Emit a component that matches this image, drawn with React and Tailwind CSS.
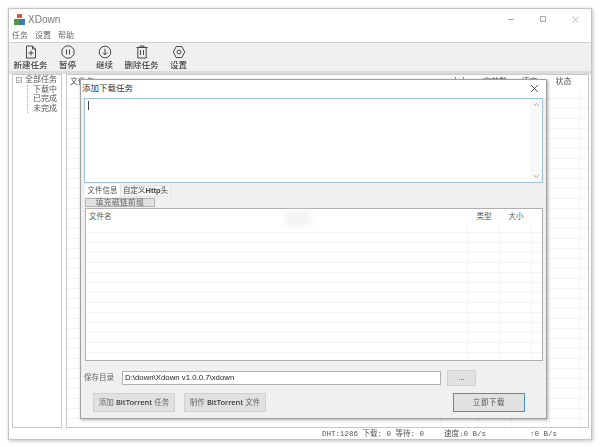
const cjk = "font-['Liberation_Sans','Noto_Sans_CJK_SC',sans-serif]";

const tools = [
  { label: "新建任务", icon: "new" },
  { label: "暂停", icon: "pause" },
  { label: "继续", icon: "down" },
  { label: "删除任务", icon: "trash" },
  { label: "设置", icon: "gear" },
];

function ToolIcon({ name }) {
  const common = { width: 14, height: 14, viewBox: "0 0 14 14", fill: "none", stroke: "#333", strokeWidth: 0.9 };
  if (name === "new")
    return (
      <svg {...common}>
        <path d="M2.500 1h6l3 3v9h-9z M8.500 1v3h3 M7 5.500v5 M4.500 8h5" />
      </svg>
    );
  if (name === "pause")
    return (
      <svg {...common}>
        <circle cx="7" cy="7" r="6.200" />
        <path d="M5.500 4.500v5 M8.500 4.500v5" />
      </svg>
    );
  if (name === "down")
    return (
      <svg {...common}>
        <circle cx="7" cy="7" r="5.800" />
        <path d="M7 3.800v6 M4.800 7.600L7 9.800l2.200-2.200" />
      </svg>
    );
  if (name === "trash")
    return (
      <svg {...common}>
        <path d="M1.500 2.500h11 M5 2.500v-1.500h4v1.500 M2.800 2.500v10.500h8.400v-10.500 M5.500 5v5 M8.500 5v5" />
      </svg>
    );
  return (
    <svg {...common}>
      <path d="M4.200 1.500h5.600l2.900 5.500-2.900 5.500h-5.600l-2.900-5.500z" strokeLinejoin="round" />
      <circle cx="7" cy="7" r="1.900" />
    </svg>
  );
}

function GridRows({ count, columns }) {
  return (
    <div className="flex-1 overflow-hidden">
      {Array.from({ length: count }).map((_, i) => (
        <div key={i} className="flex h-[10px] border-b border-[#f4f4f4]">
          {columns.map((c, j) => (
            <div key={j} className={`${c} border-r border-[#f4f4f4]`} />
          ))}
        </div>
      ))}
    </div>
  );
}

function Dialog() {
  const boldName = "font-['Noto_Sans'] font-medium text-[7.500px] text-[#333]";
  return (
    <div className="absolute left-[71px] top-[70px] flex h-[340px] w-[467px] flex-col border border-[#a0a0a0] bg-[#f0f0f0] shadow-[1px_1px_3px_rgba(0,0,0,0.35)]">
      <div className="flex h-[18px] items-center justify-between bg-white pb-[2px] pl-[1px] pr-[7px] text-[8.500px] text-[#333]">
        <span>添加下载任务</span>
        <svg width="9" height="9" viewBox="0 0 9 9" stroke="#444" strokeWidth="0.9">
          <path d="M1 1l7 7 M8 1l-7 7" />
        </svg>
      </div>
      <div className="mx-[3px] flex h-[85px] justify-between border border-[#9cc3dc] bg-white">
        <span className="ml-[3px] mt-[2px] h-[9px] w-px bg-[#444]" />
        <div className="flex w-[12px] flex-col items-center justify-between bg-[#f8f8f8] py-[3px]">
          <svg width="7" height="5" viewBox="0 0 7 5" fill="none" stroke="#aaa">
            <path d="M1 4l2.500-2.500 2.500 2.500" />
          </svg>
          <svg width="7" height="5" viewBox="0 0 7 5" fill="none" stroke="#aaa">
            <path d="M1 1l2.500 2.500 2.500-2.500" />
          </svg>
        </div>
      </div>
      <div className="ml-[4px] mt-px flex h-[13px] items-end whitespace-nowrap text-[7.500px] text-[#555]">
        <span className="flex h-[13px] w-[35px] items-center justify-center bg-white">文件信息</span>
        <span className="flex h-[12px] w-[51px] items-center justify-center border border-[#e4e4e4] bg-[#f4f4f4] text-[#444]">
          自定义<b className="font-semibold">Http</b>头
        </span>
      </div>
      <button className="ml-[4px] mt-px h-[9px] w-[70px] border border-[#b4b4b4] bg-[#e1e1e1] text-[7.500px] leading-[7px] tracking-[0.6px] text-[#666]">
        填充磁链前缀
      </button>
      <div className="relative ml-[4px] mr-[3px] mt-px flex h-[153px] flex-col border border-[#b0b0b0] bg-white">
        <div className="flex h-[14px] items-center pt-px text-[7.500px] text-[#555]">
          <span className="w-[382px] pl-[3px]">文件名</span>
          <span className="w-[32px] text-center">类型</span>
          <span className="w-[32px] text-center">大小</span>
        </div>
        <GridRows count={14} columns={["w-[382px]", "w-[32px]", "w-[32px]"]} />
        <div className="absolute left-[199px] top-[2px] h-[15px] w-[26px] rounded-sm bg-[#f3f3f3] blur-[2px]" />
      </div>
      <div className="mt-[9px] flex h-[16px] items-center pl-[3px]">
        <span className="w-[38px] text-[7.500px] text-[#666]">保存目录</span>
        <div className="flex h-[14px] w-[319px] items-center border border-[#b0b0b0] bg-white pl-[2px] text-[7.800px] text-[#222]">
          D:\down\Xdown v1.0.0.7\xdown
        </div>
        <button className="ml-[6px] h-[16px] w-[29px] border border-[#d0d0d0] bg-[#e1e1e1] text-[8px] text-[#444]">...</button>
      </div>
      <div className="mt-[7px] flex items-center pl-[12px]">
        <button className="h-[19px] w-[82px] whitespace-nowrap border border-[#d0d0d0] bg-[#e1e1e1] text-[7.500px] text-[#666]">
          添加 <span className={boldName}>BitTorrent</span> 任务
        </button>
        <button className="ml-[9px] h-[19px] w-[82px] whitespace-nowrap border border-[#d0d0d0] bg-[#e1e1e1] text-[7.500px] text-[#666]">
          制作 <span className={boldName}>BitTorrent</span> 文件
        </button>
        <button className="ml-[187px] h-[19px] w-[72px] border border-[#4a90c4] bg-[#e1e1e1] text-[7.500px] tracking-[0.6px] text-[#555]">
          立即下载
        </button>
      </div>
    </div>
  );
}

export default function App() {
  return (
    <div className={`${cjk} h-[447px] w-[600px] overflow-hidden bg-white pl-[8px] pt-[8px]`}>
      <div className="relative flex h-[432px] w-[584px] flex-col border border-[#c4c4c4] bg-white shadow-[1px_1px_4px_rgba(0,0,0,0.25)] blur-[0.5px]">
        <div className="flex h-[18px] shrink-0 items-center pl-[5px] pt-[2px]">
          <svg width="11" height="11" viewBox="0 0 11 11">
            <rect x="3" y="0" width="5" height="4" fill="#c9603a" />
            <rect x="0" y="5" width="5" height="6" fill="#4c9a45" />
            <rect x="5" y="5" width="6" height="6" fill="#3a78c2" />
          </svg>
          <span className="ml-[3px] text-[10px] text-[#777]">XDown</span>
          <div className="ml-auto flex items-center pr-[12px]">
            <span className="h-px w-[6px] bg-[#aaa]" />
            <span className="ml-[26px] h-[6px] w-[6px] border border-[#aaa]" />
            <svg className="ml-[26px]" width="7" height="7" viewBox="0 0 7 7" stroke="#aaa" strokeWidth="0.8">
              <path d="M0.500 0.500l6 6 M6.500 0.500l-6 6" />
            </svg>
          </div>
        </div>
        <div className="flex h-[16px] shrink-0 items-center gap-[7px] border-b border-[#d0d0d0] pl-[3px] pt-[2px] text-[8px] text-[#666]">
          <span>任务</span>
          <span>设置</span>
          <span>帮助</span>
        </div>
        <div className="flex h-[28px] shrink-0 bg-[#f0f0f0] pl-[3px] pt-[2px]">
          {tools.map((t) => (
            <div key={t.label} className="flex w-[37px] flex-col items-center text-[8.500px] leading-[12px] text-[#222]">
              <ToolIcon name={t.icon} />
              <span className="whitespace-nowrap">{t.label}</span>
            </div>
          ))}
        </div>
        <div className="h-[3px] shrink-0 bg-[#dcdcdc]" />
        <div className="flex flex-1 gap-[4px] overflow-hidden pl-[3px] pr-[2px]">
          <div className="w-[50px] border border-[#c8c8c8] pl-[3px] text-[8px] leading-[9.500px] text-[#555]">
            <div className="flex items-center">
              <span className="mr-[3px] flex h-[6px] w-[6px] items-center justify-center border border-[#aaa] text-[6px] leading-none">−</span>
              全部任务
            </div>
            <div className="ml-[11px] border-l border-dotted border-[#aaa] pl-[5px]">
              <div>下载中</div>
              <div>已完成</div>
              <div>未完成</div>
            </div>
          </div>
          <div className="flex flex-1 flex-col border border-[#c8c8c8]">
            <div className="flex h-[14px] items-center text-[8px] text-[#555]">
              <span className="w-[374px] pl-[3px]">文件名</span>
              <span className="w-[37px] text-center">大小</span>
              <span className="w-[34px] text-center">字节数</span>
              <span className="w-[35px] text-center">速度</span>
              <span className="w-[33px] text-center">状态</span>
            </div>
            <GridRows count={34} columns={["w-[374px]", "w-[37px]", "w-[34px]", "w-[35px]", "w-[33px]"]} />
          </div>
        </div>
        <div className="flex h-[11px] shrink-0 items-end whitespace-pre pl-[313px] font-['Liberation_Mono','Noto_Sans_CJK_SC',monospace] text-[7.500px] leading-[9px] text-[#555]">
          <span>DHT:1286 下载: 0 等待: 0</span>
          <span className="ml-[20px]">速度↓0 B/s</span>
          <span className="ml-[44px]">↑0 B/s</span>
        </div>
        <Dialog />
      </div>
    </div>
  );
}
